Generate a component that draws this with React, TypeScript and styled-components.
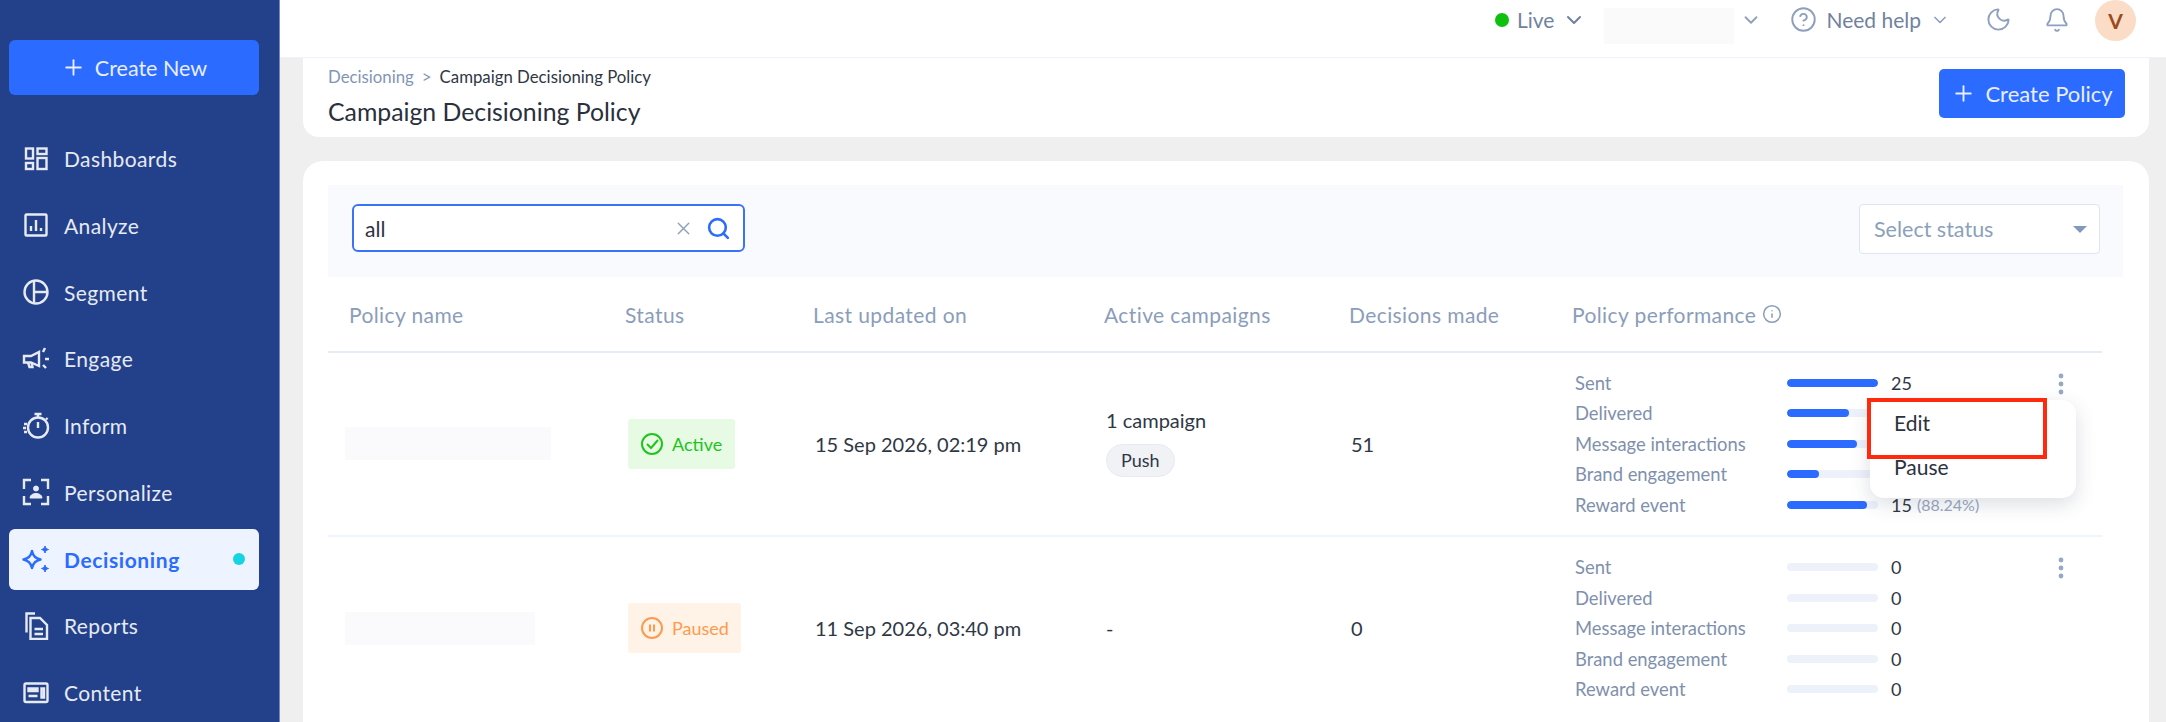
import React from "react";
import styled, { createGlobalStyle } from "styled-components";
import { ChevronDown, Plus, Moon, Bell, Search, X, CircleHelp, Info } from "lucide-react";

const GlobalStyle = createGlobalStyle`
  html, body { margin: 0; padding: 0; height: 100%; overflow: hidden; }
  body { font-family: "Lato", "Liberation Sans", sans-serif; color: #2b3240; }
  * { box-sizing: border-box; }
`;

const stroke = { fill: "none", stroke: "currentColor", strokeWidth: 2.4 };

const DashIcon = () => (
  <svg width="28" height="28" viewBox="0 0 28 28" {...stroke}>
    <rect x="4" y="3.500" width="7" height="10" />
    <rect x="15.500" y="3.500" width="9" height="5.500" />
    <rect x="4" y="18" width="7" height="6" />
    <rect x="15.500" y="13" width="9" height="11" />
  </svg>
);
const AnalyzeIcon = () => (
  <svg width="28" height="28" viewBox="0 0 28 28" {...stroke}>
    <rect x="3.500" y="3.500" width="21" height="21" rx="1" />
    <path d="M9 20v-5M14 20V9M19 20v-3" />
  </svg>
);
const SegmentIcon = () => (
  <svg width="28" height="28" viewBox="0 0 28 28" {...stroke}>
    <circle cx="14" cy="14" r="11.500" />
    <path d="M12 3v22M12 14h13.500" />
  </svg>
);
const EngageIcon = () => (
  <svg width="28" height="28" viewBox="0 0 28 28" {...stroke}>
    <path d="M2 11h7l8-4v14l-8-3.500H2z" />
    <path d="M6 17.500l1.500 4.500h3l-1-4.500M21 7l2-4M23 14h4M21 20l3 3" />
  </svg>
);
const InformIcon = () => (
  <svg width="28" height="28" viewBox="0 0 28 28" {...stroke}>
    <circle cx="16" cy="15.500" r="10" />
    <path d="M12.500 2h7M16 2v3M16 10v6M24 6l1.500 1.500M2 12h3M1 16h3M2 20h3" />
  </svg>
);
const PersonalizeIcon = () => (
  <svg width="28" height="28" viewBox="0 0 28 28" {...stroke}>
    <path d="M9 2H2v9M19 2h7v9M2 18v8h7M26 18v8h-7" />
    <circle cx="14" cy="10.500" r="2.500" fill="currentColor" strokeWidth="1" />
    <path d="M8 20c0-6 12-6 12 0z" fill="currentColor" strokeWidth="1" />
  </svg>
);
const DecisionIcon = () => (
  <svg width="28" height="28" viewBox="0 0 28 28" fill="none" stroke="currentColor" strokeWidth="2.4" strokeLinejoin="round">
    <path d="M10 6c1 5 3.500 7.500 8.500 8.500-5 1-7.500 3.500-8.500 8.500-1-5-3.500-7.500-8.500-8.500 5-1 7.500-3.500 8.500-8.500z" />
    <path d="M23 1c.5 2 1.500 3 3.500 3.500-2 .5-3 1.500-3.500 3.500-.5-2-1.500-3-3.500-3.500 2-.5 3-1.500 3.500-3.500zM23 20c.5 2 1.500 3 3.500 3.500-2 .5-3 1.500-3.500 3.500-.5-2-1.500-3-3.500-3.500 2-.5 3-1.500 3.500-3.500z" fill="currentColor" strokeWidth="1" />
  </svg>
);
const ReportsIcon = () => (
  <svg width="28" height="28" viewBox="0 0 28 28" {...stroke}>
    <path d="M13 1.500H4.500v19" />
    <path d="M8.500 6h9.500l7 7v14H8.500z" />
    <path d="M12.500 17h8.500M12.500 22h8.500" />
  </svg>
);
const ContentIcon = () => (
  <svg width="28" height="28" viewBox="0 0 28 28" {...stroke}>
    <rect x="2.500" y="4.500" width="23" height="18.500" rx="1.500" />
    <path d="M6.500 9.500h9v2.500h-9zM6.500 17h9M19.500 9.500h2.500v9h-2.500z" />
  </svg>
);
const CheckCircle = () => (
  <svg width="22" height="22" viewBox="0 0 22 22" fill="none" stroke="currentColor" strokeWidth="2">
    <circle cx="11" cy="11" r="10" />
    <path d="M6 11l4 4 7-8" />
  </svg>
);
const PauseCircle = () => (
  <svg width="22" height="22" viewBox="0 0 22 22" fill="none" stroke="currentColor" strokeWidth="2">
    <circle cx="11" cy="11" r="10" />
    <path d="M9 7.500v7M13 7.500v7" />
  </svg>
);
const KebabDots = () => (
  <svg width="24" height="24" viewBox="0 0 24 24" fill="currentColor">
    <circle cx="12" cy="4" r="2.400" />
    <circle cx="12" cy="12" r="2.400" />
    <circle cx="12" cy="20" r="2.400" />
  </svg>
);

const Page = styled.div`
  display: flex;
  width: 2166px;
  height: 722px;
  overflow: hidden;
  background: #efefef;
`;
const Sidebar = styled.aside`
  width: 280px;
  flex: none;
  display: flex;
  flex-direction: column;
  padding: 40px 20px 0 9px;
  background: #23418a;
  border-right: 1px solid #7189bf;
`;
const CreateNew = styled.button`
  height: 55px;
  width: 250px;
  flex: none;
  display: flex;
  align-items: center;
  justify-content: center;
  gap: 9px;
  margin-bottom: 33px;
  border: 0;
  border-radius: 6px;
  background: #2b6bff;
  color: #e8eeff;
  font: 400 21.500px "Lato", sans-serif;
`;
const Nav = styled.nav`
  display: flex;
  flex-direction: column;
  gap: 5.750px;
`;
const NavItem = styled.div<{ $active?: boolean }>`
  width: 250px;
  height: 61px;
  flex: none;
  display: flex;
  align-items: center;
  gap: 14px;
  padding: 0 14px 0 13px;
  border-radius: 6px;
  background: ${(p) => (p.$active ? "#eef4ff" : "transparent")};
  color: ${(p) => (p.$active ? "#2b6bff" : "#e6eaf3")};
  font-size: 21px;
  letter-spacing: ${(p) => (p.$active ? 0.6 : 0.4)}px;
  font-weight: ${(p) => (p.$active ? 700 : 400)};
`;
const NavDot = styled.span`
  width: 12px;
  height: 12px;
  margin-left: auto;
  border-radius: 50%;
  background: #16d3e2;
`;
const Main = styled.main`
  flex: 1;
  min-width: 0;
  display: flex;
  flex-direction: column;
`;
const TopBar = styled.header`
  height: 58px;
  flex: none;
  display: flex;
  align-items: flex-start;
  background: #fff;
  border-bottom: 1px solid #eef2fb;
`;
const TopItem = styled.div<{ $left: number; $gap?: number }>`
  display: flex;
  align-items: center;
  height: 39px;
  gap: ${(p) => p.$gap ?? 8}px;
  margin-left: ${(p) => p.$left}px;
  color: #71829f;
  font-size: 21px;
`;
const LiveDot = styled.span`
  width: 14px;
  height: 14px;
  border-radius: 50%;
  background: #0fc00f;
`;
const MaskBox = styled.div`
  width: 130px;
  height: 36px;
  margin: 8px 0 0 18px;
  background: #fafafb;
`;
const Avatar = styled.div`
  width: 41px;
  height: 41px;
  margin-left: 25px;
  display: flex;
  align-items: center;
  justify-content: center;
  border-radius: 50%;
  background: #fbdcc7;
  color: #9a4a1d;
  font-size: 21px;
  font-weight: 700;
`;
const Content = styled.div`
  flex: 1;
  min-height: 0;
  display: flex;
  flex-direction: column;
  gap: 24px;
  padding: 0 17px 0 23px;
`;
const HeaderCard = styled.section`
  height: 79px;
  flex: none;
  display: flex;
  justify-content: space-between;
  padding: 11px 24px 0 25px;
  background: #fff;
  border-radius: 0 0 16px 16px;
`;
const Crumbs = styled.div`
  display: flex;
  gap: 8px;
  margin-top: -1px;
  font-size: 16.800px;
  line-height: 18px;
  color: #2f3745;
`;
const CrumbLink = styled.span`
  color: #8395b5;
`;
const Title = styled.h1`
  margin: 11px 0 0;
  font-size: 24.800px;
  line-height: 30px;
  font-weight: 400;
  color: #2a303c;
`;
const PolicyButton = styled.button`
  width: 186px;
  height: 49px;
  display: flex;
  align-items: center;
  justify-content: center;
  gap: 9px;
  border: 0;
  border-radius: 5px;
  background: #2b6bff;
  color: #e8eeff;
  font: 400 22px "Lato", sans-serif;
`;
const TableCard = styled.section`
  flex: 1;
  min-height: 0;
  padding: 24px 26px 0 25px;
  background: #fff;
  border-radius: 20px 20px 0 0;
`;
const Filters = styled.div`
  height: 92px;
  display: flex;
  align-items: flex-start;
  justify-content: space-between;
  padding: 19px 23px 0 24px;
  background: #f8fafe;
`;
const SearchBox = styled.div`
  width: 393px;
  height: 48px;
  display: flex;
  align-items: center;
  gap: 12px;
  padding: 0 12px 0 11px;
  border: 2px solid #3a73f5;
  border-radius: 6px;
  background: #fff;
  font-size: 21px;
  color: #2b3240;
`;
const SearchText = styled.span`
  flex: 1;
`;
const SelectBox = styled.div`
  width: 241px;
  height: 50px;
  display: flex;
  align-items: center;
  justify-content: space-between;
  padding: 0 12px 0 14px;
  border: 1px solid #dde4f2;
  border-radius: 4px;
  background: #fff;
  color: #8c9fbd;
  font-size: 21.500px;
`;
const Caret = styled.span`
  width: 0;
  height: 0;
  border-left: 7px solid transparent;
  border-right: 7px solid transparent;
  border-top: 7px solid #8398bd;
`;
const Table = styled.div`
  width: 1774px;
`;
const gridCols = "297px 188px 291px 245px 223px 1fr";
const HeadRow = styled.div`
  display: grid;
  grid-template-columns: ${gridCols};
  align-items: center;
  height: 76px;
  border-bottom: 2px solid #e4eaf6;
  color: #8a9dbb;
  font-size: 21px;
  letter-spacing: 0.4px;
  & > :first-child { padding-left: 21px; }
`;
const HeadCell = styled.div`
  display: flex;
  align-items: center;
  gap: 6px;
`;
const Row = styled.div`
  position: relative;
  display: grid;
  grid-template-columns: ${gridCols};
  align-items: center;
  height: 183.500px;
  border-bottom: 2px solid #f0f4fc;
  font-size: 20px;
  color: #2f3745;
  &:last-child { border-bottom: 0; }
`;
const NameMask = styled.div<{ $w: number }>`
  width: ${(p) => p.$w}px;
  height: 33px;
  margin-left: 17px;
  background: #fafafd;
`;
const Badge = styled.div<{ $paused?: boolean }>`
  display: inline-flex;
  align-items: center;
  gap: 9px;
  width: ${(p) => (p.$paused ? 113 : 107)}px;
  height: 50px;
  margin-left: 3px;
  padding-left: 13px;
  border-radius: 3px;
  background: ${(p) => (p.$paused ? "#fff3e8" : "#e7fbe4")};
  color: ${(p) => (p.$paused ? "#ff9a4d" : "#22c31c")};
  font-size: 18px;
`;
const CampaignCell = styled.div`
  display: flex;
  flex-direction: column;
  align-items: flex-start;
  gap: 12px;
  padding-left: 2px;
  margin-top: -3px;
`;
const Pill = styled.span`
  display: inline-flex;
  align-items: center;
  height: 33px;
  padding: 0 14px;
  border: 1px solid #e6eaf2;
  border-radius: 17px;
  background: #f0f2f6;
  font-size: 18px;
`;
const Indented = styled.div`
  padding-left: 2px;
`;
const PerfCell = styled.div`
  display: flex;
  align-items: flex-start;
  height: 152px;
  padding-left: 3px;
`;
const PerfList = styled.div`
  display: flex;
  flex-direction: column;
  width: 474px;
`;
const PerfRow = styled.div`
  display: flex;
  align-items: center;
  height: 30.400px;
  font-size: 18px;
`;
const PerfLabel = styled.span`
  width: 212px;
  font-size: 18.400px;
  color: #7f90ad;
`;
const Track = styled.div`
  width: 91px;
  height: 8px;
  margin-right: 13px;
  border-radius: 4px;
  background: #edf1fa;
  overflow: hidden;
`;
const Fill = styled.div`
  height: 100%;
  border-radius: 4px;
  background: #2b6bff;
`;
const Pct = styled.span`
  margin-left: 5px;
  font-size: 16px;
  color: #9aa9c2;
`;
const Kebab = styled.div`
  margin-top: 4px;
  color: #97a8c6;
  line-height: 0;
`;
const Menu = styled.div`
  position: absolute;
  left: 1542px;
  top: 47px;
  z-index: 2;
  width: 206px;
  height: 98px;
  padding: 8px 0 0 24px;
  border-radius: 14px;
  background: #fff;
  box-shadow: 0 6px 20px rgba(40, 50, 80, 0.16);
  font-size: 21px;
  color: #2b3240;
`;
const MenuItem = styled.div`
  height: 44px;
  line-height: 30px;
`;
const RedBox = styled.div`
  position: absolute;
  left: -3px;
  top: -2px;
  width: 180px;
  height: 61px;
  border: 4px solid #ff2a0e;
`;

type Perf = { label: string; pct: number; value?: string; extra?: string };

const nav = [
  { label: "Dashboards", icon: <DashIcon /> },
  { label: "Analyze", icon: <AnalyzeIcon /> },
  { label: "Segment", icon: <SegmentIcon /> },
  { label: "Engage", icon: <EngageIcon /> },
  { label: "Inform", icon: <InformIcon /> },
  { label: "Personalize", icon: <PersonalizeIcon /> },
  { label: "Decisioning", icon: <DecisionIcon />, active: true },
  { label: "Reports", icon: <ReportsIcon /> },
  { label: "Content", icon: <ContentIcon /> },
];

const activePerf: Perf[] = [
  { label: "Sent", pct: 100, value: "25" },
  { label: "Delivered", pct: 68 },
  { label: "Message interactions", pct: 77 },
  { label: "Brand engagement", pct: 35 },
  { label: "Reward event", pct: 88, value: "15", extra: "(88.24%)" },
];
const pausedPerf: Perf[] = ["Sent", "Delivered", "Message interactions", "Brand engagement", "Reward event"].map(
  (label) => ({ label, pct: 0, value: "0" })
);

function Performance({ rows }: { rows: Perf[] }) {
  return (
    <PerfCell>
      <PerfList>
        {rows.map((r) => (
          <PerfRow key={r.label}>
            <PerfLabel>{r.label}</PerfLabel>
            <Track>
              <Fill style={{ width: `${r.pct}%` }} />
            </Track>
            <span>{r.value}</span>
            {r.extra && <Pct>{r.extra}</Pct>}
          </PerfRow>
        ))}
      </PerfList>
      <Kebab>
        <KebabDots />
      </Kebab>
    </PerfCell>
  );
}

export default function App() {
  return (
    <Page>
      <GlobalStyle />
      <Sidebar>
        <CreateNew>
          <Plus size={25} strokeWidth={1.8} />
          Create New
        </CreateNew>
        <Nav>
          {nav.map((n) => (
            <NavItem key={n.label} $active={n.active}>
              {n.icon}
              {n.label}
              {n.active && <NavDot />}
            </NavItem>
          ))}
        </Nav>
      </Sidebar>
      <Main>
        <TopBar>
          <TopItem $left={1215}>
            <LiveDot />
            Live
            <ChevronDown size={24} />
          </TopItem>
          <MaskBox />
          <TopItem $left={6}>
            <ChevronDown size={22} color="#8ea0be" />
          </TopItem>
          <TopItem $left={28} $gap={9}>
            <CircleHelp size={27} strokeWidth={1.7} color="#8ea0be" />
            Need help
            <ChevronDown size={20} color="#8ea0be" />
          </TopItem>
          <TopItem $left={35}>
            <Moon size={27} strokeWidth={1.7} color="#8ea0be" />
          </TopItem>
          <TopItem $left={32}>
            <Bell size={26} strokeWidth={1.7} color="#8ea0be" />
          </TopItem>
          <Avatar>V</Avatar>
        </TopBar>
        <Content>
          <HeaderCard>
            <div>
              <Crumbs>
                <CrumbLink>Decisioning</CrumbLink>
                <CrumbLink>&gt;</CrumbLink>
                <span>Campaign Decisioning Policy</span>
              </Crumbs>
              <Title>Campaign Decisioning Policy</Title>
            </div>
            <PolicyButton>
              <Plus size={25} strokeWidth={1.8} />
              Create Policy
            </PolicyButton>
          </HeaderCard>
          <TableCard>
            <Filters>
              <SearchBox>
                <SearchText>all</SearchText>
                <X size={21} strokeWidth={1.6} color="#8ea0be" />
                <Search size={25} strokeWidth={2.5} color="#2b6bff" />
              </SearchBox>
              <SelectBox>
                Select status
                <Caret />
              </SelectBox>
            </Filters>
            <Table>
              <HeadRow>
                <HeadCell>Policy name</HeadCell>
                <HeadCell>Status</HeadCell>
                <HeadCell>Last updated on</HeadCell>
                <HeadCell>Active campaigns</HeadCell>
                <HeadCell>Decisions made</HeadCell>
                <HeadCell>
                  Policy performance
                  <Info size={20} strokeWidth={1.8} />
                </HeadCell>
              </HeadRow>
              <Row>
                <NameMask $w={206} />
                <div>
                  <Badge>
                    <CheckCircle />
                    Active
                  </Badge>
                </div>
                <Indented>15 Sep 2026, 02:19 pm</Indented>
                <CampaignCell>
                  <span>1 campaign</span>
                  <Pill>Push</Pill>
                </CampaignCell>
                <Indented>51</Indented>
                <Performance rows={activePerf} />
                <Menu>
                  <RedBox />
                  <MenuItem>Edit</MenuItem>
                  <MenuItem>Pause</MenuItem>
                </Menu>
              </Row>
              <Row>
                <NameMask $w={190} />
                <div>
                  <Badge $paused>
                    <PauseCircle />
                    Paused
                  </Badge>
                </div>
                <Indented>11 Sep 2026, 03:40 pm</Indented>
                <Indented>-</Indented>
                <Indented>0</Indented>
                <Performance rows={pausedPerf} />
              </Row>
            </Table>
          </TableCard>
        </Content>
      </Main>
    </Page>
  );
}
